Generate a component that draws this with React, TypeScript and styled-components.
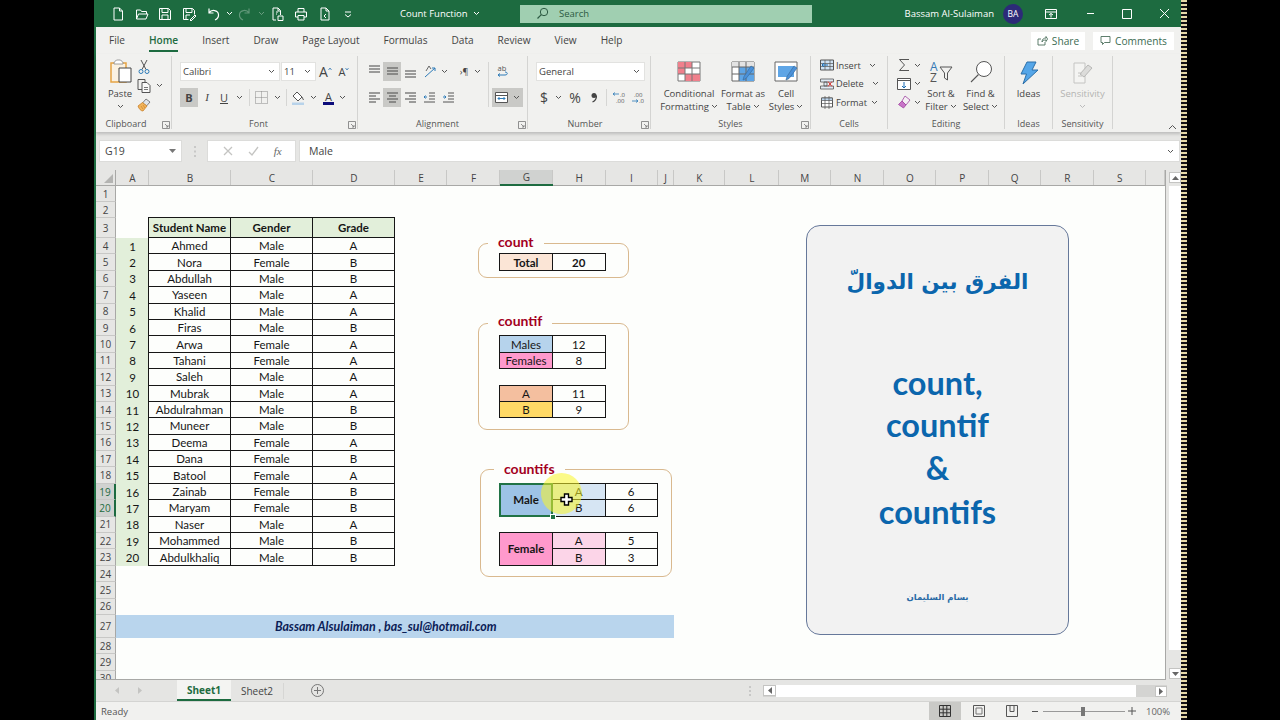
import React from 'react'
import styled, { createGlobalStyle } from 'styled-components'

const UI = '"Open Sans", "Noto Sans", sans-serif'
const CELL = 'Lato, "Liberation Sans", sans-serif'
const AR = '"DejaVu Sans", sans-serif'
const GREEN = '#1d6b40'

const Global = createGlobalStyle`
  html, body { margin: 0; height: 720px; background: #000; overflow: hidden; }
  * { box-sizing: border-box; }
`

const Stage = styled.div`
  display: flex;
  height: 720px;
  padding-left: 94px;
  font-family: ${UI};
  color: #444;
`
const Win = styled.div`
  width: 1087px;
  height: 720px;
  display: flex;
  flex-direction: column;
  border-left: 2px solid ${GREEN};
  background: #f1f1ef;
`
const Stripe = styled.div`
  width: 6px;
  height: 720px;
  background: repeating-linear-gradient(180deg, #e6d9a8 0 2px, #141014 2px 4px);
`

/* small svg helper */
const SvgBox = styled.svg`
  display: block;
  flex: none;
`
const Ic = ({ w, h = w, children }: { w: number; h?: number; children: React.ReactNode }) => (
  <SvgBox width={w} height={h} viewBox={`0 0 ${w} ${h}`} fill="none">{children}</SvgBox>
)
const Chev = ({ c = '#555' }: { c?: string }) => (
  <Ic w={7} h={5}><path d="M1 1l2.500 2.500L6 1" stroke={c} /></Ic>
)

/* title bar */
const TitleBar = styled.div`
  height: 27px;
  flex: none;
  display: flex;
  align-items: center;
  background: ${GREEN};
  color: #fff;
  padding-left: 10px;
`
const Qat = styled.div<{ $w?: number }>`
  width: ${p => p.$w || 24}px;
  height: 27px;
  flex: none;
  display: flex;
  align-items: center;
  justify-content: center;
`
const DocTitle = styled.div`
  width: 120px;
  margin-left: 41px;
  flex: none;
  font-size: 9.5px;
  display: flex;
  align-items: center;
  gap: 5px;
`
const SearchBox = styled.div`
  width: 292px;
  height: 18px;
  flex: none;
  background: #a0cfb1;
  color: #2c5a42;
  font-size: 9.5px;
  display: flex;
  align-items: center;
  gap: 10px;
  padding-left: 16px;
`
const UserName = styled.div`
  margin-left: auto;
  font-size: 9.5px;
  white-space: nowrap;
`
const Avatar = styled.div`
  width: 20px;
  height: 20px;
  margin-left: 9px;
  border-radius: 50%;
  background: #2c2a78;
  font-size: 8.5px;
  display: flex;
  align-items: center;
  justify-content: center;
`
const WinBtn = styled.div<{ $w: number }>`
  width: ${p => p.$w}px;
  height: 27px;
  display: flex;
  align-items: center;
  justify-content: center;
`

/* tabs */
const TabRow = styled.div`
  height: 27px;
  flex: none;
  display: flex;
  align-items: center;
  gap: 24px;
  padding: 0 7px 0 13px;
  font-size: 10.1px;
`
const Tab = styled.div<{ $on?: boolean }>`
  position: relative;
  line-height: 27px;
  color: ${p => (p.$on ? GREEN : '#444')};
  font-weight: ${p => (p.$on ? 600 : 400)};
  &::after {
    content: '';
    display: ${p => (p.$on ? 'block' : 'none')};
    position: absolute;
    left: 0;
    right: 0;
    bottom: 2px;
    height: 2px;
    background: ${GREEN};
  }
`
const TabRight = styled.div`
  margin-left: auto;
  display: flex;
  gap: 8px;
`
const TopBtn = styled.div<{ $w: number }>`
  width: ${p => p.$w}px;
  height: 18px;
  background: #fff;
  color: #3b6b52;
  font-size: 10.2px;
  display: flex;
  align-items: center;
  justify-content: center;
  gap: 4px;
`

/* ribbon */
const Ribbon = styled.div`
  height: 78px;
  flex: none;
  display: flex;
  align-items: flex-start;
  padding-top: 2px;
  box-shadow: 0 2px 3px rgba(0, 0, 0, 0.18);
  position: relative;
  z-index: 2;
`
const GroupBox = styled.div<{ $w: number }>`
  position: relative;
  width: ${p => p.$w}px;
  height: 73px;
  flex: none;
  display: flex;
  flex-direction: column;
  border-right: 1px solid #d4d4d2;
`
const GroupBody = styled.div<{ $pl?: number; $pt?: number }>`
  flex: 1;
  display: flex;
  padding: ${p => p.$pt ?? 6}px 0 0 ${p => p.$pl ?? 0}px;
  min-height: 0;
`
const GroupLabel = styled.div<{ $pr?: number }>`
  height: 12px;
  line-height: 12px;
  margin-bottom: -1px;
  padding-right: ${p => p.$pr ?? 0}px;
  text-align: center;
  font-size: 9px;
  color: #555;
`
const Launcher = styled.div`
  position: absolute;
  right: 1px;
  bottom: 0;
`
const Stack = styled.div<{ $w?: number; $gap?: number; $mt?: number }>`
  display: flex;
  flex-direction: column;
  gap: ${p => p.$gap ?? 7}px;
  margin-top: ${p => p.$mt ?? 0}px;
  ${p => (p.$w ? `width: ${p.$w}px;` : '')}
  flex: none;
`
const Row = styled.div<{ $h?: number }>`
  display: flex;
  align-items: center;
  height: ${p => p.$h ?? 19}px;
`
const Select = styled.div<{ $w: number; $ml?: number }>`
  width: ${p => p.$w}px;
  height: 19px;
  margin-left: ${p => p.$ml ?? 0}px;
  background: #fff;
  border: 1px solid #e2e2e0;
  color: #444;
  font-size: 9.5px;
  display: flex;
  align-items: center;
  justify-content: space-between;
  padding: 0 4px 0 2px;
`
const Btn = styled.div<{ $w: number; $on?: boolean; $ml?: number }>`
  width: ${p => p.$w}px;
  height: 19px;
  margin-left: ${p => p.$ml ?? 0}px;
  flex: none;
  display: flex;
  align-items: center;
  justify-content: center;
  background: ${p => (p.$on ? '#c9c9c6' : 'transparent')};
  color: #444;
`
const Letter = styled.span<{ $s?: number; $b?: boolean; $i?: boolean; $u?: boolean; $f?: string }>`
  font-size: ${p => p.$s ?? 11}px;
  font-weight: ${p => (p.$b ? 700 : 400)};
  font-style: ${p => (p.$i ? 'italic' : 'normal')};
  text-decoration: ${p => (p.$u ? 'underline' : 'none')};
  font-family: ${p => p.$f ?? UI};
  line-height: 1;
`
const VLine = styled.div<{ $ml?: number; $mr?: number; $h?: number }>`
  width: 1px;
  height: ${p => p.$h ?? 17}px;
  background: #d6d6d4;
  margin: 0 ${p => p.$mr ?? 0}px 0 ${p => p.$ml ?? 0}px;
  flex: none;
`
const BigBtn = styled.div<{ $w: number; $dim?: boolean; $mt?: number }>`
  width: ${p => p.$w}px;
  margin-top: ${p => p.$mt ?? 0}px;
  flex: none;
  display: flex;
  flex-direction: column;
  align-items: center;
  color: ${p => (p.$dim ? '#b4b4b2' : '#444')};
`
const BigIcon = styled.div<{ $h?: number }>`
  height: ${p => p.$h ?? 26}px;
  display: flex;
  align-items: flex-start;
  justify-content: center;
`
const BigText = styled.div`
  font-size: 9.5px;
  line-height: 13px;
  text-align: center;
  white-space: nowrap;
  display: flex;
  flex-direction: column;
  align-items: center;
`
const Line2 = styled.span`
  display: flex;
  align-items: center;
  gap: 2px;
  height: 13px;
`
const SmallRow = styled.div`
  height: 18.5px;
  display: flex;
  align-items: center;
  font-size: 9.2px;
  gap: 2px;
`
const ChevWrap = styled.span<{ $ml?: number }>`
  margin-left: ${p => p.$ml ?? 0}px;
  display: inline-flex;
`
const Collapse = styled.div`
  margin-left: 55px;
  align-self: flex-end;
  padding-bottom: 2px;
`

/* formula bar */
const FormulaBar = styled.div`
  height: 38px;
  flex: none;
  background: #e6e6e4;
  display: flex;
  align-items: center;
  padding: 0 1px 0 3px;
`
const NameBox = styled.div`
  width: 83px;
  height: 22px;
  background: #fff;
  border: 1px solid #dcdcda;
  font-size: 10.5px;
  color: #444;
  display: flex;
  align-items: center;
  justify-content: space-between;
  padding: 0 5px;
`
const GripDots = styled.div`
  width: 25px;
  display: flex;
  justify-content: center;
`
const FxBox = styled.div`
  width: 89px;
  height: 22px;
  background: #fff;
  border: 1px solid #dcdcda;
  display: flex;
  align-items: center;
  justify-content: space-around;
  padding: 0 6px 0 8px;
  color: #666;
`
const FormulaInput = styled.div`
  flex: 1;
  height: 22px;
  margin-left: 3px;
  background: #fff;
  border: 1px solid #dcdcda;
  font-size: 10.5px;
  display: flex;
  align-items: center;
  justify-content: space-between;
  padding: 0 5px 0 9px;
`

/* sheet */
const SheetArea = styled.div`
  height: 510px;
  flex: none;
  display: flex;
  background: #e6e6e4;
`
const Sheet = styled.div`
  position: relative;
  width: 1070px;
  height: 510px;
  overflow: hidden;
  background: #fdfefc;
  border-bottom: 1px solid #a8a8a6;
  border-right: 1px solid #a8a8a6;
  display: grid;
  grid-template-columns: 20px 33px 82px 82px 82px 52px 53px 53px 52.5px 52px 16px 51.5px 53.5px 52.5px 53px 52px 52.5px 52.5px 52.5px 52.5px 1fr;
  grid-template-rows: 16px 16px 16px 20px repeat(23, 16.4px) 23px 16.4px 16.4px 16.4px;
`
const ColHead = styled.div<{ $on?: boolean }>`
  background: ${p => (p.$on ? '#d0d2d0' : '#e6e6e4')};
  box-shadow: inset -1px 0 0 #c8c8c6;
  border-bottom: ${p => (p.$on ? `2px solid ${GREEN}` : '1px solid #a8a8a6')};
  font-size: 10px;
  color: #444;
  display: flex;
  align-items: center;
  justify-content: center;
`
const RowHead = styled.div<{ $r: number; $on?: boolean }>`
  grid-column: 1;
  grid-row: ${p => p.$r + 1};
  background: ${p => (p.$on ? '#d0d2d0' : '#e6e6e4')};
  border-right: ${p => (p.$on ? `2px solid ${GREEN}` : '1px solid #a8a8a6')};
  border-bottom: 1px solid #c8c8c6;
  font-size: 10px;
  color: ${p => (p.$on ? '#1d6b40' : '#444')};
  display: flex;
  align-items: center;
  justify-content: center;
  overflow: hidden;
`
const Corner = styled.div`
  grid-column: 1;
  grid-row: 1;
  background: #e6e6e4;
  border-right: 1px solid #a8a8a6;
  border-bottom: 1px solid #a8a8a6;
  display: flex;
  align-items: flex-end;
  justify-content: flex-end;
  padding: 0 2px 2px 0;
`
const Cell = styled.div<{ $c: number; $r: number; $rs?: number; $bg?: string; $b?: boolean; $sel?: boolean }>`
  grid-column: ${p => p.$c};
  grid-row: ${p => p.$r + 1} / span ${p => p.$rs ?? 1};
  margin: -1px 0 0 -1px;
  background: ${p => p.$bg ?? '#fdfefc'};
  border: ${p => (p.$sel ? '2px solid #217346' : '1px solid #161616')};
  font-family: ${CELL};
  font-size: 11.5px;
  font-weight: ${p => (p.$b ? 700 : 400)};
  color: #161616;
  display: flex;
  align-items: center;
  justify-content: center;
  position: relative;
  z-index: ${p => (p.$sel ? 2 : 1)};
  white-space: nowrap;
`
const IdCell = styled(Cell)`
  border: none;
  margin: 0;
  background: #e2efda;
`
const Band = styled.div`
  grid-column: 2 / span 10;
  grid-row: 28;
  background: #b9d5ed;
  color: #0b2056;
  font-family: ${CELL};
  font-size: 12.4px;
  font-weight: 700;
  font-style: italic;
  display: flex;
  align-items: center;
  justify-content: center;
  padding-right: 18px;
`
const Legend = styled.div<{ $x: number; $y: number; $w: number; $h: number }>`
  position: absolute;
  left: ${p => p.$x}px;
  top: ${p => p.$y}px;
  width: ${p => p.$w}px;
  height: ${p => p.$h}px;
  border: 1px solid #d9b98f;
  border-radius: 9px;
`
const LegendLabel = styled.span<{ $x?: number; $t: number }>`
  position: absolute;
  left: ${p => p.$x ?? 9}px;
  top: ${p => p.$t}px;
  padding: 0 10px;
  line-height: 16px;
  background: #fdfefc;
  color: #a3001e;
  font-family: ${CELL};
  font-size: 14px;
  font-weight: 700;
`
const Handle = styled.i`
  position: absolute;
  right: -5px;
  bottom: -5px;
  width: 6px;
  height: 6px;
  background: #217346;
  border: 1px solid #fff;
`
const Spot = styled.div`
  position: absolute;
  left: 445px;
  top: 303px;
  width: 41px;
  height: 41px;
  border-radius: 50%;
  background: rgba(250, 246, 40, 0.55);
  z-index: 3;
`
const Pointer = styled.div`
  position: absolute;
  left: 464px;
  top: 323px;
  z-index: 4;
`
const Card = styled.div`
  position: absolute;
  left: 710px;
  top: 55px;
  width: 263px;
  height: 410px;
  border: 1px solid #66789a;
  border-radius: 14px;
  background: #f2f2f2;
  display: flex;
  flex-direction: column;
  align-items: center;
  color: #0b66ad;
  text-align: center;
`
const CardTitle = styled.div`
  margin-top: 41px;
  height: 30px;
  line-height: 30px;
  font-family: ${AR};
  font-size: 21.5px;
  font-weight: 700;
  direction: rtl;
`
const CardLines = styled.div`
  margin-top: 65px;
  font-family: ${CELL};
  font-size: 32.5px;
  font-weight: 700;
`
const CardLine = styled.div<{ $h: number }>`
  height: ${p => p.$h}px;
  line-height: ${p => p.$h}px;
`
const CardSign = styled.div`
  margin-top: 57px;
  font-family: ${AR};
  font-size: 8.5px;
  font-weight: 700;
  color: #2a6ba6;
  direction: rtl;
`

/* scrollbars */
const VScroll = styled.div`
  width: 12px;
  margin-left: 3px;
  display: flex;
  flex-direction: column;
  padding: 2px 0 1px;
  flex: none;
`
const ScrollBtn = styled.div<{ $w?: number; $end?: boolean }>`
  height: 11px;
  width: ${p => p.$w ?? 12}px;
  flex: none;
  margin: ${p => (p.$end ? 'auto 0 0 auto' : '0')};
  background: #fff;
  border: 1px solid #c4c4c2;
  display: flex;
  align-items: center;
  justify-content: center;
`
const VThumb = styled.div`
  height: 464px;
  margin-top: 3px;
  background: #fff;
  flex: none;
`

/* sheet tabs */
const SheetTabs = styled.div`
  height: 22px;
  flex: none;
  display: flex;
  align-items: center;
  background: #e5e5e3;
  border-bottom: 1px solid #d4d4d2;
`
const NavArrows = styled.div`
  width: 81px;
  padding-left: 19px;
  display: flex;
  gap: 19px;
`
const SheetTab = styled.div<{ $on?: boolean }>`
  width: ${p => (p.$on ? 54 : 52)}px;
  height: 21px;
  display: flex;
  align-items: center;
  justify-content: center;
  font-size: 10px;
  font-weight: ${p => (p.$on ? 700 : 400)};
  color: ${p => (p.$on ? GREEN : '#444')};
  background: ${p => (p.$on ? '#f4f4f2' : 'transparent')};
  border-bottom: ${p => (p.$on ? `2px solid ${GREEN}` : 'none')};
`
const AddSheet = styled.div`
  margin-left: 27px;
  display: flex;
`
const HBar = styled.div`
  margin-left: auto;
  width: 404px;
  height: 12px;
  margin-right: 14px;
  display: flex;
  background: #d4d4d2;
`
const HThumb = styled.div`
  width: 360px;
  background: #fff;
  flex: none;
`
const Grip = styled.div`
  margin-left: 425px;
  display: flex;
`

/* status bar */
const StatusBar = styled.div`
  flex: 1;
  display: flex;
  align-items: center;
  font-size: 9.5px;
  padding-left: 5px;
  color: #555;
`
const ViewBtn = styled.div<{ $on?: boolean; $w: number; $ml?: number }>`
  width: ${p => p.$w}px;
  height: 18px;
  margin-left: ${p => p.$ml ?? 0}px;
  flex: none;
  display: flex;
  align-items: center;
  justify-content: center;
  background: ${p => (p.$on ? '#c9c9c6' : 'transparent')};
`
const ViewBtns = styled.div`
  margin-left: auto;
  display: flex;
`
const Zoom = styled.div`
  width: 82px;
  height: 1px;
  margin: 0 3px 0 2px;
  background: #999;
  position: relative;
  flex: none;
`
const ZoomThumb = styled.i`
  position: absolute;
  left: 38px;
  top: -4px;
  width: 4px;
  height: 9px;
  background: #777;
`
const Percent = styled.div`
  margin-left: 10px;
  width: 35px;
  flex: none;
  font-size: 9.5px;
  color: #666;
`

const tabs = ['File', 'Home', 'Insert', 'Draw', 'Page Layout', 'Formulas', 'Data', 'Review', 'View', 'Help']
const cols = ['A', 'B', 'C', 'D', 'E', 'F', 'G', 'H', 'I', 'J', 'K', 'L', 'M', 'N', 'O', 'P', 'Q', 'R', 'S', '']
const students = [
  ['Ahmed', 'Male', 'A'], ['Nora', 'Female', 'B'], ['Abdullah', 'Male', 'B'], ['Yaseen', 'Male', 'A'],
  ['Khalid', 'Male', 'A'], ['Firas', 'Male', 'B'], ['Arwa', 'Female', 'A'], ['Tahani', 'Female', 'A'],
  ['Saleh', 'Male', 'A'], ['Mubrak', 'Male', 'A'], ['Abdulrahman', 'Male', 'B'], ['Muneer', 'Male', 'B'],
  ['Deema', 'Female', 'A'], ['Dana', 'Female', 'B'], ['Batool', 'Female', 'A'], ['Zainab', 'Female', 'B'],
  ['Maryam', 'Female', 'B'], ['Naser', 'Male', 'A'], ['Mohammed', 'Male', 'B'], ['Abdulkhaliq', 'Male', 'B'],
]

const launcher = (
  <Launcher>
    <Ic w={8}><path d="M.5.500h7v7h-7zM3 3l3 3M6 4v2H4" stroke="#777" strokeWidth=".8" /></Ic>
  </Launcher>
)
const Group = ({ w, label, pl, pt, pr, launch, children }: { w: number; label: string; pl?: number; pt?: number; pr?: number; launch?: boolean; children: React.ReactNode }) => (
  <GroupBox $w={w}>
    <GroupBody $pl={pl} $pt={pt}>{children}</GroupBody>
    <GroupLabel $pr={pr}>{label}</GroupLabel>
    {launch && launcher}
  </GroupBox>
)

const AlignLines = ({ rows }: { rows: number[][] }) => (
  <Ic w={13} h={13}>
    {rows.map(([x, y, l], i) => <path key={i} d={`M${x} ${y}h${l}`} stroke="#555" strokeWidth="1.1" />)}
  </Ic>
)

const Brush = () => <path d="M20 5l3 2-6 8-2 2.500-3 1.500 1-3.500z" fill="#4a90d9" stroke="#3a6f9f" strokeWidth=".7" />

export default function App() {
  const wht = { stroke: '#fff', strokeWidth: 1 }
  return (
    <>
      <Global />
      <Stage>
        <Win>
          <TitleBar>
            <Qat><Ic w={14}><path d="M3 1h5.500L11.500 4v9H3zM8.500 1v3h3" {...wht} /></Ic></Qat>
            <Qat $w={23}><Ic w={14}><path d="M1.500 12V3h4l1 1.500h5V7M1.500 12l2-5H13l-2 5z" {...wht} /></Ic></Qat>
            <Qat $w={24}><Ic w={14}><path d="M1.500 1.500h9l2 2v9h-11zM4 1.500v4h6v-4M4 12.500V8h6v4.500" {...wht} /></Ic></Qat>
            <Qat $w={24}><Ic w={14}><path d="M1.500 1.500h9l2 2v4M1.500 1.500v11h5M4 1.500v4h6v-4M4 12V8h4M8 13l5-5 1 1-5 5z" {...wht} /></Ic></Qat>
            <Qat $w={24}><Ic w={14}><path d="M3 1.500v4.500h4.500M3 6c2.500-4 9-3 9.500 1.500.3 2.500-1.500 4.500-3.500 5.500" stroke="#fff" strokeWidth="1.2" /></Ic></Qat>
            <Qat $w={8}><Chev c="#fff" /></Qat>
            <Qat $w={24}><Ic w={14}><path d="M11 1.500v4.500H6.500M11 6C8.500 2 2 3 1.500 7.500 1.200 10 3 12 5 13" stroke="#fff" strokeOpacity=".3" strokeWidth="1.2" /></Ic></Qat>
            <Qat $w={8}><Chev c="#ffffff55" /></Qat>
            <Qat $w={24}><Ic w={14}><path d="M3 1h5l2.500 2.500V8M3 1v12h3M8 1v3h2.500M8 9h5v4.500H8zM6 5h2M6 7h1" {...wht} /></Ic></Qat>
            <Qat $w={24}><Ic w={14}><path d="M4 5V1.500h6V5M4 10H1.500V5h11v5H10M4 8.500h6V13H4z" {...wht} /></Ic></Qat>
            <Qat $w={24}><Ic w={14}><path d="M3 1h5l3 3v9H3zM8 1v3h3M8 7L6 9l2 2" {...wht} /></Ic></Qat>
            <Qat $w={22}><Ic w={8}><path d="M1 2h6M1 4.500l3 2.500 3-2.500" {...wht} /></Ic></Qat>
            <DocTitle>Count Function <Chev c="#fff" /></DocTitle>
            <SearchBox>
              <Ic w={13}><circle cx="8" cy="5" r="3.700" stroke="#2c5a42" /><path d="M5.300 7.700L1.500 11.500" stroke="#2c5a42" strokeWidth="1.2" /></Ic>
              Search
            </SearchBox>
            <UserName>Bassam Al-Sulaiman</UserName>
            <Avatar>BA</Avatar>
            <WinBtn $w={56}><Ic w={12}><path d="M.5 1.500h11v9H.5zM.5 4h11M6 9.500V5.500M4 7l2-1.500L8 7" {...wht} /></Ic></WinBtn>
            <WinBtn $w={22}><Ic w={9} h={3}><path d="M1 1.500h7" {...wht} /></Ic></WinBtn>
            <WinBtn $w={52}><Ic w={10}><path d="M.5.500h9v9h-9z" {...wht} /></Ic></WinBtn>
            <WinBtn $w={23}><Ic w={11}><path d="M1 1l9 9M10 1l-9 9" {...wht} /></Ic></WinBtn>
            <WinBtn $w={5}> </WinBtn>
          </TitleBar>

          <TabRow>
            {tabs.map(t => <Tab key={t} $on={t === 'Home'}>{t}</Tab>)}
            <TabRight>
              <TopBtn $w={54}>
                <Ic w={11}><path d="M1 4h3M1 4v6h7V7M5 7c0-3 2-4 4-4V1.500L10.500 4 9 6.500V5C7 5 5.500 5.500 5 7z" stroke="#4c6f5c" strokeWidth=".9" /></Ic>
                Share
              </TopBtn>
              <TopBtn $w={81}>
                <Ic w={11}><path d="M1 1.500h9v6H4.500L2.500 9.500v-2H1z" stroke="#4c6f5c" strokeWidth=".9" /></Ic>
                Comments
              </TopBtn>
            </TabRight>
          </TabRow>

          <Ribbon>
            <Group w={76} label="Clipboard" launch pl={8} pt={3} pr={15}>
              <BigBtn $w={32}>
                <BigIcon $h={28}>
                  <Ic w={25} h={26}>
                    <path d="M3 4h15v19H3z" stroke="#e6a444" strokeWidth="1.5" fill="#fbf2e2" />
                    <path d="M6 4c0-2 2-1.500 2.500-3h4c.5 1.500 2.500 1 2.500 3v1H6z" fill="#fff" stroke="#888" strokeWidth=".8" />
                    <path d="M11 9h12v14H11z" fill="#fff" stroke="#444" />
                  </Ic>
                </BigIcon>
                <BigText>Paste<Line2><Chev /></Line2></BigText>
              </BigBtn>
              <Stack $gap={0} $mt={-2}>
                <Btn $w={16}><Ic w={12} h={16}><path d="M3 1l5 9.500M9 1L4 10.500" stroke="#555" /><circle cx="3" cy="12.500" r="2" stroke="#2d7bb8" /><circle cx="9" cy="12.500" r="2" stroke="#2d7bb8" /></Ic></Btn>
                <Row $h={19}>
                  <Btn $w={16}><Ic w={14} h={15}><path d="M1 1.500h7v10H1z" stroke="#555" fill="#f1f1ef" /><path d="M5 4.500h5l3 3v7H5z" stroke="#555" fill="#f9f9f8" /><path d="M7 9.500h4M7 11.500h4" stroke="#555" strokeWidth=".8" /></Ic></Btn>
                  <ChevWrap $ml={4}><Chev /></ChevWrap>
                </Row>
                <Btn $w={16}><Ic w={14}><path d="M9 1l4 3-3.500 4L5.500 5z" fill="#dfe4ea" stroke="#666" strokeWidth=".8" /><path d="M5.500 4.500L1 8c1 3 3 5 5 5l4-5z" fill="#f2b45a" stroke="#c9822c" strokeWidth=".8" /><path d="M4 8l2 3M6 7l2 3" stroke="#c9822c" strokeWidth=".7" /></Ic></Btn>
              </Stack>
            </Group>

            <Group w={186} label="Font" launch pl={8} pr={12}>
              <Stack>
                <Row>
                  <Select $w={100}>Calibri<Chev /></Select>
                  <Select $w={35} $ml={1}>11<Chev /></Select>
                  <Btn $w={19}><Letter $s={14}>A</Letter><Ic w={4} h={10}><path d="M.5 3L2 1l1.500 2" stroke="#3478b5" strokeWidth=".8" /></Ic></Btn>
                  <Btn $w={18}><Letter $s={11}>A</Letter><Ic w={4} h={10}><path d="M.5 1L2 3l1.500-2" stroke="#3478b5" strokeWidth=".8" /></Ic></Btn>
                </Row>
                <Row>
                  <Btn $w={18} $on><Letter $b $s={11}>B</Letter></Btn>
                  <Btn $w={18}><Letter $i $s={11} $f='"Liberation Serif", serif'>I</Letter></Btn>
                  <Btn $w={16}><Letter $u $s={11}>U</Letter></Btn>
                  <Btn $w={14}><Chev /></Btn>
                  <VLine $ml={3} />
                  <Btn $w={20} $ml={1}><Ic w={13}><path d="M.5.500h12v12H.5zM6.500.500v12M.5 6.500h12" stroke="#888" strokeDasharray="1 1" /></Ic></Btn>
                  <Btn $w={12}><Chev /></Btn>
                  <VLine $ml={3} />
                  <Btn $w={20} $ml={1}>
                    <Ic w={14}><path d="M6 1l5 5-4 4-5-5z" stroke="#555" fill="#fff" /><path d="M11 6l1.500 3" stroke="#555" /><path d="M1 11.500h12V14H1z" fill="#b8d3ea" /></Ic>
                  </Btn>
                  <Btn $w={11}><Chev /></Btn>
                  <Btn $w={18}>
                    <Ic w={13} h={14}><text x="6.500" y="10" textAnchor="middle" fontSize="11" fontFamily="Open Sans" fill="#444">A</text><path d="M1 11h11v3H1z" fill="#0c0c7a" /></Ic>
                  </Btn>
                  <Btn $w={11}><Chev /></Btn>
                </Row>
              </Stack>
            </Group>

            <Group w={170} label="Alignment" launch pl={7} pr={10}>
              <Stack $w={123}>
                <Row>
                  <Btn $w={18}><AlignLines rows={[[1, 1, 11], [1, 4, 11], [1, 7, 11]]} /></Btn>
                  <Btn $w={18} $on><AlignLines rows={[[1, 3, 11], [1, 6, 11], [1, 9, 11]]} /></Btn>
                  <Btn $w={18}><AlignLines rows={[[1, 6, 11], [1, 9, 11], [1, 12, 11]]} /></Btn>
                  <Btn $w={18} $ml={3}><Ic w={14}><path d="M1 12L11 3M8 3h3v3" stroke="#2d7bb8" /><path d="M2 6l3-5 2 3" stroke="#666" /></Ic></Btn>
                  <Btn $w={8}><Chev /></Btn>
                  <Btn $w={18} $ml={7}><Letter $s={9}>{'›¶'}</Letter></Btn>
                  <Btn $w={8}><Chev /></Btn>
                </Row>
                <Row>
                  <Btn $w={18}><AlignLines rows={[[1, 2, 11], [1, 5, 7], [1, 8, 11], [1, 11, 7]]} /></Btn>
                  <Btn $w={18} $on><AlignLines rows={[[1, 2, 11], [3, 5, 7], [1, 8, 11], [3, 11, 7]]} /></Btn>
                  <Btn $w={18}><AlignLines rows={[[1, 2, 11], [5, 5, 7], [1, 8, 11], [5, 11, 7]]} /></Btn>
                  <Btn $w={20}><Ic w={13}><path d="M6 2h6M6 5h6M6 8h6M1 11h11" stroke="#555" /><path d="M4 6H1M2.500 4.500L1 6l1.500 1.500" stroke="#2d7bb8" /></Ic></Btn>
                  <Btn $w={19}><Ic w={13}><path d="M6 2h6M6 5h6M6 8h6M1 11h11" stroke="#555" /><path d="M1 6h3M2.500 4.500L4 6 2.500 7.500" stroke="#2d7bb8" /></Ic></Btn>
                </Row>
              </Stack>
              <VLine $h={45} />
              <Stack>
                <Row>
                  <Btn $w={20} $ml={3}>
                    <Ic w={14} h={15}><text x="7" y="7" textAnchor="middle" fontSize="7.500" fontFamily="Open Sans" fill="#555">ab</text><path d="M3 11h7c3 0 3-3 0-3M3 11l2-1.500M3 11l2 1.500" stroke="#2d7bb8" /></Ic>
                  </Btn>
                </Row>
                <Row>
                  <Btn $w={31} $on $ml={3}>
                    <Ic w={13}><path d="M.5 1.500h12v10H.5z" stroke="#555" fill="#fff" /><path d="M.5 4.500h12" stroke="#555" /><path d="M3 7.500h7M3 7.500l1.500-1.500M3 7.500L4.500 9M10 7.500L8.500 6M10 7.500L8.500 9" stroke="#2d7bb8" /></Ic>
                    <ChevWrap $ml={5}><Chev /></ChevWrap>
                  </Btn>
                </Row>
              </Stack>
            </Group>

            <Group w={123} label="Number" launch pl={8} pr={8}>
              <Stack>
                <Select $w={109}>General<Chev /></Select>
                <Row>
                  <Btn $w={16}><Letter $s={14}>$</Letter></Btn>
                  <Btn $w={13}><Chev /></Btn>
                  <Btn $w={20}><Letter $s={14}>%</Letter></Btn>
                  <Btn $w={18}><Ic w={6} h={11}><circle cx="3" cy="3.500" r="2.500" fill="#444" /><path d="M5.500 3.500C5.500 7 4 9 1.500 10" stroke="#444" strokeWidth="1.300" /></Ic></Btn>
                  <VLine $ml={3} />
                  <Btn $w={20} $ml={2}><Ic w={14} h={13}><text x="8" y="5.500" fontSize="6" fontFamily="Open Sans" fill="#555">.0</text><text x="4" y="12" fontSize="6" fontFamily="Open Sans" fill="#555">.00</text><path d="M7 3H1M3 1.500L1 3l2 1.500" stroke="#2d7bb8" strokeWidth=".8" /></Ic></Btn>
                  <Btn $w={17}><Ic w={14} h={13}><text x="3" y="5.500" fontSize="6" fontFamily="Open Sans" fill="#555">.00</text><text x="8" y="12" fontSize="6" fontFamily="Open Sans" fill="#555">.0</text><path d="M1 10h6M5 8.500L7 10l-2 1.500" stroke="#2d7bb8" strokeWidth=".8" /></Ic></Btn>
                </Row>
              </Stack>
            </Group>

            <Group w={160} label="Styles" launch pl={10} pt={5}>
              <BigBtn $w={56}>
                <BigIcon>
                  <Ic w={24} h={21}>
                    <path d="M1 1h22v19H1z" fill="#fff" stroke="#777" />
                    <path d="M1 1h7v6H1zM8 1h7v6H8zM1 7h7v6H1zM15 13h8v7h-8zM8 13h7v7H8z" fill="#f0808c" />
                    <path d="M8 1v19M15 1v19M1 7h22M1 13h22" stroke="#777" />
                  </Ic>
                </BigIcon>
                <BigText>Conditional<Line2>Formatting <Chev /></Line2></BigText>
              </BigBtn>
              <BigBtn $w={52}>
                <BigIcon>
                  <Ic w={25} h={22}>
                    <path d="M1 1h22v19H1z" fill="#fff" stroke="#666" />
                    <path d="M1 1h22v5H1z" fill="#e3e3e3" />
                    <path d="M8 6h15v14H8z" fill="#5ea5e6" />
                    <path d="M8 1v19M15 1v19M1 6h22M1 13h22" stroke="#666" />
                    <Brush />
                  </Ic>
                </BigIcon>
                <BigText>Format as<Line2>Table <Chev /></Line2></BigText>
              </BigBtn>
              <BigBtn $w={34}>
                <BigIcon>
                  <Ic w={25} h={22}>
                    <path d="M1 1h22v19H1z" fill="#fff" stroke="#666" />
                    <path d="M4 5h16v11H4z" fill="#5ea5e6" />
                    <Brush />
                  </Ic>
                </BigIcon>
                <BigText>Cell<Line2>Styles <Chev /></Line2></BigText>
              </BigBtn>
            </Group>

            <Group w={77} label="Cells" pl={9} pt={0}>
              <Stack $gap={0}>
                <SmallRow>
                  <Ic w={14}><path d="M.5 2h13v10H.5z" stroke="#555" fill="#cfe2f3" /><path d="M5 2v10M10 2v10M.5 5.500h13M.5 8.500h13" stroke="#555" strokeWidth=".7" /><path d="M2 7h6M4 5L2 7l2 2" stroke="#1c6fb5" /></Ic>
                  Insert<ChevWrap $ml={6}><Chev /></ChevWrap>
                </SmallRow>
                <SmallRow>
                  <Ic w={14}><path d="M.5 2h13v3H.5zM.5 9h13v3H.5zM4 5h3v4H4z" stroke="#555" fill="#dfeaf4" strokeWidth=".8" /><path d="M8 4.500l4 5M12 4.500l-4 5" stroke="#d33" /></Ic>
                  Delete<ChevWrap $ml={6}><Chev /></ChevWrap>
                </SmallRow>
                <SmallRow>
                  <Ic w={14}><path d="M1.500 3h11v9h-11z" stroke="#555" fill="#fff" /><path d="M1.500 3h11v2.500h-11z" fill="#bcd6ee" stroke="#555" strokeWidth=".7" /><path d="M5 1v13M9 1v13M1 8.500h12" stroke="#555" strokeWidth=".7" /></Ic>
                  Format<ChevWrap $ml={2}><Chev /></ChevWrap>
                </SmallRow>
              </Stack>
            </Group>

            <Group w={117} label="Editing" pl={9} pt={0}>
              <Stack $gap={0} $w={25}>
                <SmallRow>
                  <Btn $w={14}><Ic w={12} h={14}><path d="M11 1.500H1.500L6.500 7l-5 5.500H11" stroke="#555" /></Ic></Btn>
                  <ChevWrap $ml={1}><Chev /></ChevWrap>
                </SmallRow>
                <SmallRow><Ic w={14}><path d="M.5 1.500h13v11H.5z" stroke="#555" fill="#fff" /><path d="M.5 3.500h13" stroke="#555" /><path d="M7 5v6M5 9l2 2 2-2" stroke="#1c6fb5" /></Ic><ChevWrap $ml={1}><Chev /></ChevWrap></SmallRow>
                <SmallRow><Ic w={14}><path d="M8 1l5 4-4 5-4-4z" fill="#f4f0f4" stroke="#a044a0" strokeWidth=".8" /><path d="M5 6l4 4-2.500 3L1.500 9.500z" fill="#c874c8" stroke="#a044a0" strokeWidth=".8" /></Ic><ChevWrap $ml={1}><Chev /></ChevWrap></SmallRow>
              </Stack>
              <BigBtn $w={38} $mt={5}>
                <BigIcon>
                  <Ic w={25} h={24}>
                    <text x="1" y="10" fontSize="12" fontFamily="Open Sans" fill="#3478b5">A</text>
                    <text x="1" y="21" fontSize="12" fontFamily="Open Sans" fill="#555">Z</text>
                    <path d="M11 6h12l-4.500 6v7l-3-2v-5z" stroke="#555" />
                  </Ic>
                </BigIcon>
                <BigText>Sort &amp;<Line2>Filter <Chev /></Line2></BigText>
              </BigBtn>
              <BigBtn $w={41} $mt={5}>
                <BigIcon>
                  <Ic w={25} h={24}>
                    <circle cx="16" cy="8" r="7.500" stroke="#555" fill="#fff" />
                    <path d="M10.500 13.500L3 21" stroke="#555" strokeWidth="1.100" />
                  </Ic>
                </BigIcon>
                <BigText>Find &amp;<Line2>Select <Chev /></Line2></BigText>
              </BigBtn>
            </Group>

            <Group w={48} label="Ideas" pt={5}>
              <BigBtn $w={47}>
                <BigIcon>
                  <Ic w={20} h={24}>
                    <path d="M8 1h9l-4 8h6L4 23l3.500-10H2z" fill="#55a6e8" stroke="#2c6fa8" />
                  </Ic>
                </BigIcon>
                <BigText>Ideas</BigText>
              </BigBtn>
            </Group>

            <Group w={60} label="Sensitivity" pt={5}>
              <BigBtn $w={59} $dim>
                <BigIcon>
                  <Ic w={24} h={24}>
                    <path d="M3 2h11v20H3z" stroke="#c4c4c2" fill="#f4f4f2" />
                    <path d="M9 13l8-9 4 3-8 9z" stroke="#b8b8b6" fill="#dcdcda" />
                    <path d="M7 12h4M7 15h4" stroke="#c4c4c2" />
                  </Ic>
                </BigIcon>
                <BigText>Sensitivity<Line2><Chev c="#bbb" /></Line2></BigText>
              </BigBtn>
            </Group>

            <Collapse><Ic w={9} h={6}><path d="M1 5l3.500-3.500L8 5" stroke="#555" /></Ic></Collapse>
          </Ribbon>

          <FormulaBar>
            <NameBox>G19<Ic w={7} h={4}><path d="M0 0h7L3.500 4z" fill="#777" /></Ic></NameBox>
            <GripDots><Ic w={2} h={11}><path d="M1 0v2M1 4.500v2M1 9v2" stroke="#aaa" /></Ic></GripDots>
            <FxBox>
              <Ic w={10}><path d="M1 1l8 8M9 1L1 9" stroke="#c4c4c2" strokeWidth="1.3" /></Ic>
              <Ic w={11}><path d="M1 6l3 3 6-8" stroke="#c4c4c2" strokeWidth="1.3" /></Ic>
              <Letter $s={11} $i $f='"Liberation Serif", serif'>fx</Letter>
            </FxBox>
            <FormulaInput>Male<Chev /></FormulaInput>
          </FormulaBar>

          <SheetArea>
            <Sheet>
              <Corner><Ic w={9}><path d="M9 0v9H0z" fill="#b4b4b2" /></Ic></Corner>
              {cols.map(c => <ColHead key={c} $on={c === 'G'}>{c}</ColHead>)}
              {Array.from({ length: 30 }, (_, i) => (
                <RowHead key={i} $r={i + 1} $on={i === 18 || i === 19}>{i + 1}</RowHead>
              ))}

              <Cell $c={3} $r={3} $bg="#e2efda" $b>Student Name</Cell>
              <Cell $c={4} $r={3} $bg="#e2efda" $b>Gender</Cell>
              <Cell $c={5} $r={3} $bg="#e2efda" $b>Grade</Cell>
              {students.map((s, i) => (
                <React.Fragment key={s[0]}>
                  <IdCell $c={2} $r={i + 4}>{i + 1}</IdCell>
                  <Cell $c={3} $r={i + 4}>{s[0]}</Cell>
                  <Cell $c={4} $r={i + 4}>{s[1]}</Cell>
                  <Cell $c={5} $r={i + 4}>{s[2]}</Cell>
                </React.Fragment>
              ))}

              <Cell $c={8} $r={5} $bg="#fbe5d6" $b>Total</Cell>
              <Cell $c={9} $r={5} $b>20</Cell>

              <Cell $c={8} $r={10} $bg="#b6d3ec">Males</Cell>
              <Cell $c={9} $r={10}>12</Cell>
              <Cell $c={8} $r={11} $bg="#ff99cc">Females</Cell>
              <Cell $c={9} $r={11}>8</Cell>
              <Cell $c={8} $r={13} $bg="#f4bf9f">A</Cell>
              <Cell $c={9} $r={13}>11</Cell>
              <Cell $c={8} $r={14} $bg="#ffd966">B</Cell>
              <Cell $c={9} $r={14}>9</Cell>

              <Cell $c={9} $r={19} $bg="#d6e5f3">A</Cell>
              <Cell $c={9} $r={20} $bg="#d6e5f3">B</Cell>
              <Cell $c={10} $r={19}>6</Cell>
              <Cell $c={10} $r={20}>6</Cell>
              <Cell $c={8} $r={19} $rs={2} $bg="#9dc3e6" $b $sel>Male<Handle /></Cell>
              <Cell $c={8} $r={22} $rs={2} $bg="#ff99cc" $b>Female</Cell>
              <Cell $c={9} $r={22} $bg="#fcd5e8">A</Cell>
              <Cell $c={9} $r={23} $bg="#fcd5e8">B</Cell>
              <Cell $c={10} $r={22}>5</Cell>
              <Cell $c={10} $r={23}>3</Cell>

              <Band>Bassam Alsulaiman , bas_sul@hotmail.com</Band>

              <Legend $x={382} $y={73} $w={151} $h={35}><LegendLabel $t={-10}>count</LegendLabel></Legend>
              <Legend $x={382} $y={153} $w={151} $h={107}><LegendLabel $t={-11}>countif</LegendLabel></Legend>
              <Legend $x={384} $y={299} $w={192} $h={108}><LegendLabel $x={13} $t={-9}>countifs</LegendLabel></Legend>

              <Spot />
              <Pointer>
                <Ic w={13}><path d="M4.500 1h4v3.500H12v4H8.500V12h-4V8.500H1v-4h3.500z" fill="#fff" stroke="#000" strokeWidth="1.400" /></Ic>
              </Pointer>

              <Card>
                <CardTitle>{'الفرق بين الدوالّ'}</CardTitle>
                <CardLines>
                  <CardLine $h={42}>count,</CardLine>
                  <CardLine $h={42}>countif</CardLine>
                  <CardLine $h={43}>&amp;</CardLine>
                  <CardLine $h={46}>countifs</CardLine>
                </CardLines>
                <CardSign>{'بسام السليمان'}</CardSign>
              </Card>
            </Sheet>
            <VScroll>
              <ScrollBtn><Ic w={7} h={4}><path d="M3.500 0L7 4H0z" fill="#666" /></Ic></ScrollBtn>
              <VThumb />
              <ScrollBtn $end><Ic w={7} h={4}><path d="M0 0h7L3.500 4z" fill="#666" /></Ic></ScrollBtn>
            </VScroll>
          </SheetArea>

          <SheetTabs>
            <NavArrows>
              <Ic w={4} h={7}><path d="M4 0v7L0 3.500z" fill="#c4c4c2" /></Ic>
              <Ic w={4} h={7}><path d="M0 0v7l4-3.500z" fill="#c4c4c2" /></Ic>
            </NavArrows>
            <SheetTab $on>Sheet1</SheetTab>
            <SheetTab>Sheet2</SheetTab>
            <VLine $h={16} />
            <AddSheet>
              <Ic w={13}><circle cx="6.500" cy="6.500" r="6" stroke="#777" /><path d="M6.500 3v7M3 6.500h7" stroke="#777" /></Ic>
            </AddSheet>
            <Grip><Ic w={2} h={10}><path d="M1 0v2M1 4v2M1 8v2" stroke="#aaa" /></Ic></Grip>
            <HBar>
              <ScrollBtn $w={13}><Ic w={4} h={7}><path d="M4 0v7L0 3.500z" fill="#666" /></Ic></ScrollBtn>
              <HThumb />
              <ScrollBtn $w={12} $end><Ic w={4} h={7}><path d="M0 0v7l4-3.500z" fill="#666" /></Ic></ScrollBtn>
            </HBar>
          </SheetTabs>

          <StatusBar>
            Ready
            <ViewBtns>
              <ViewBtn $on $w={32}><Ic w={12}><path d="M.5.500h11v11H.5zM4.200.500v11M7.800.500v11M.5 4.200h11M.5 7.800h11" stroke="#333" /></Ic></ViewBtn>
              <ViewBtn $w={35}><Ic w={12}><path d="M.5.500h11v11H.5z" stroke="#555" /><path d="M3 3h6v6H3z" stroke="#777" /></Ic></ViewBtn>
              <ViewBtn $w={31}><Ic w={12}><path d="M.5.500h11v11H.5zM4 .5v6h4v-6" stroke="#555" /></Ic></ViewBtn>
            </ViewBtns>
            <ViewBtn $w={12} $ml={2}><Ic w={7} h={3}><path d="M0 1.500h6" stroke="#555" /></Ic></ViewBtn>
            <Zoom><ZoomThumb /></Zoom>
            <Ic w={8}><path d="M0 4h8M4 0v8" stroke="#555" /></Ic>
            <Percent>100%</Percent>
          </StatusBar>
        </Win>
        <Stripe />
      </Stage>
    </>
  )
}
